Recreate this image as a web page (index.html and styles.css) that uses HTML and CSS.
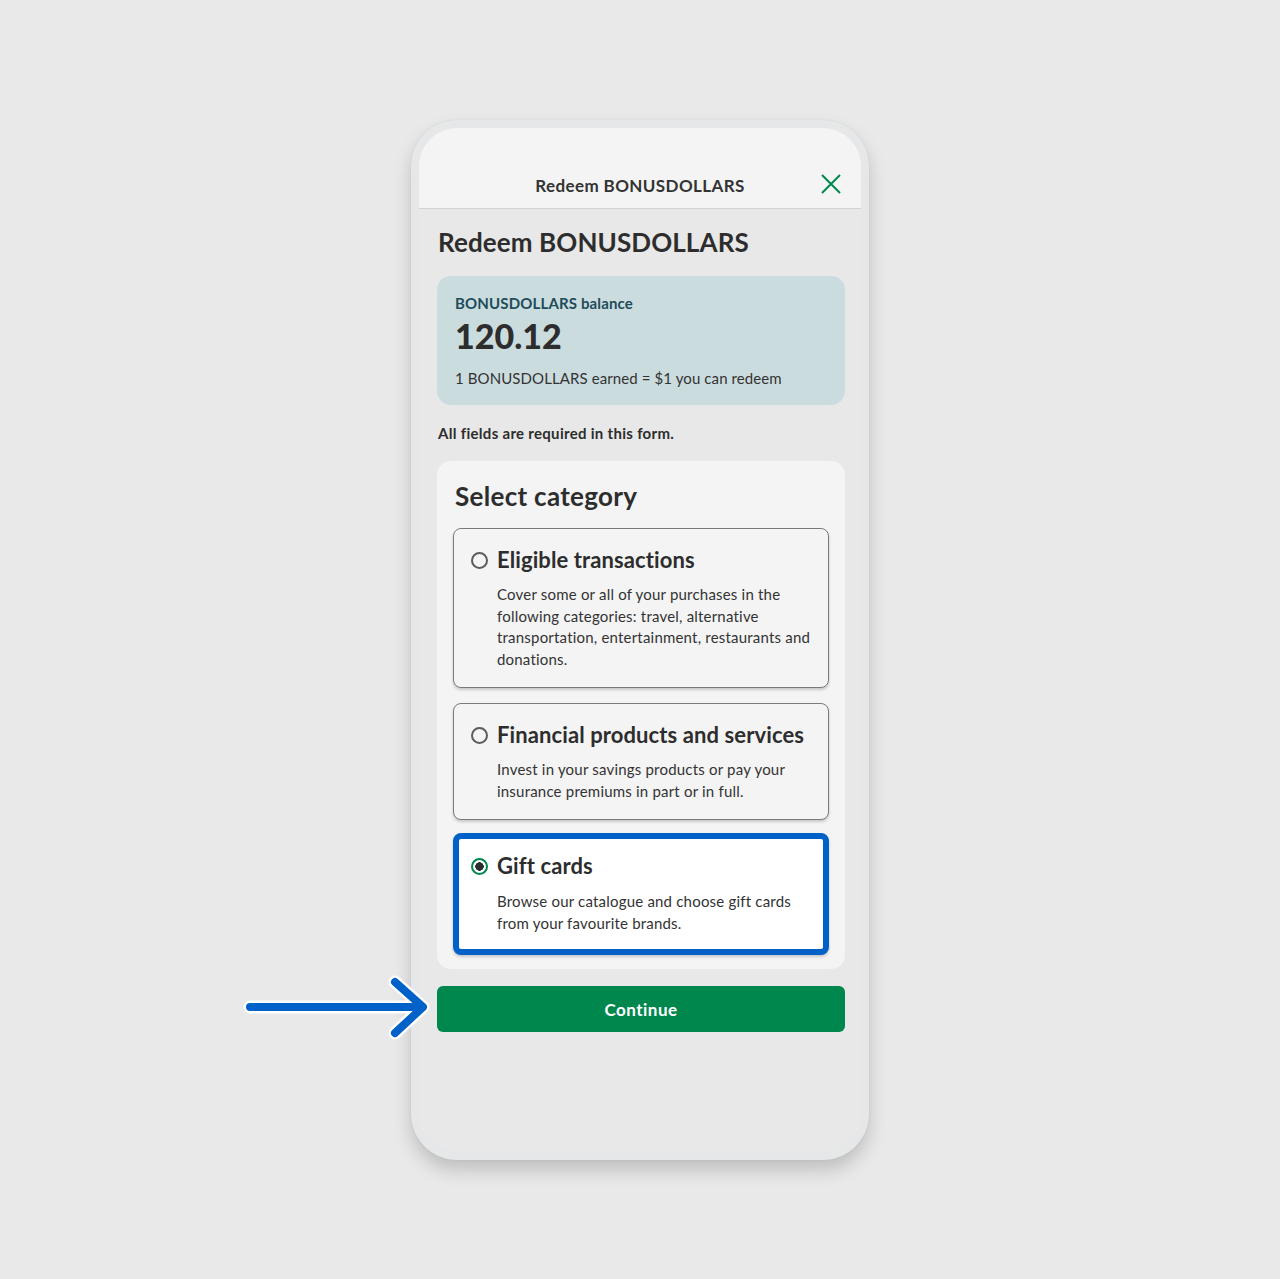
FILE: index.html
```html
<!DOCTYPE html>
<html lang="en">
<head>
  <meta charset="UTF-8" />
  <title>Redeem BONUSDOLLARS</title>
  <link rel="stylesheet" href="styles.css">
</head>
<body>
  <div class="phone">
    <!-- annotation arrow pointing at the button -->
    <svg class="arrow" width="200" height="72" viewBox="0 0 200 72">
      <g fill="none" stroke-linecap="round" stroke-linejoin="round">
        <path d="M10 35 H180 M155 10 L183 35 L155 61" stroke="#fff" stroke-width="13" />
        <path d="M10 35 H180 M155 10 L183 35 L155 61" stroke="#0061c9" stroke-width="8" />
      </g>
    </svg>

    <div class="screen">
      <div class="topbar">
        <span class="topbar-title">Redeem BONUSDOLLARS</span>
        <svg class="close" width="22" height="22" viewBox="0 0 22 22">
          <path d="M2 2 L20 20 M20 2 L2 20" stroke="#00874e" stroke-width="2" fill="none" />
        </svg>
      </div>

      <div class="content">
        <h1>Redeem BONUSDOLLARS</h1>

        <div class="balance">
          <div class="balance-label">BONUSDOLLARS balance</div>
          <div class="balance-value">120.12</div>
          <div class="balance-note">1 BONUSDOLLARS earned = $1 you can redeem</div>
        </div>

        <p class="required">All fields are required in this form.</p>

        <div class="panel">
          <h2>Select category</h2>

          <label class="option">
            <div class="option-head">
              <span class="radio"></span>
              <span class="option-title">Eligible transactions</span>
            </div>
            <p class="option-text">Cover some or all of your purchases in the following categories: travel, alternative transportation, entertainment, restaurants and donations.</p>
          </label>

          <label class="option">
            <div class="option-head">
              <span class="radio"></span>
              <span class="option-title">Financial products and services</span>
            </div>
            <p class="option-text">Invest in your savings products or pay your insurance premiums in part or in full.</p>
          </label>

          <label class="option selected">
            <div class="option-head">
              <span class="radio checked"></span>
              <span class="option-title">Gift cards</span>
            </div>
            <p class="option-text">Browse our catalogue and choose gift cards from your favourite brands.</p>
          </label>
        </div>

        <button class="continue">Continue</button>
      </div>
    </div>
  </div>
</body>
</html>
```

FILE: styles.css
```css
body {
  margin: 0;
  background-color: #e9e9e9;
  font-family: Lato, 'Noto Sans', sans-serif;
  color: #2d2d2d;
  display: flex;
  flex-direction: column;
  align-items: center;
  min-height: 1279px;
}

.phone {
  position: relative;
  margin-top: 120px;
  width: 458px;
  height: 1040px;
  box-sizing: border-box;
  padding: 8px;
  border-radius: 46px;
  background-color: #e6e7e8;
  box-shadow: 0 10px 18px rgba(0, 0, 0, 0.18), 0 0 2px rgba(0, 0, 0, 0.08);
}

.arrow {
  position: absolute;
  left: -171px;
  top: 852px;
}

.screen {
  height: 100%;
  border-radius: 38px;
  overflow: hidden;
  background-color: #e8e8e8;
}

.topbar {
  height: 81px;
  box-sizing: border-box;
  background-color: #f4f4f4;
  border-bottom: 1px solid #d2d2d2;
  display: flex;
  align-items: flex-end;
  justify-content: center;
  padding-bottom: 12px;
  position: relative;
}

.topbar-title {
  font-size: 17px;
  font-weight: bold;
  line-height: 20px;
  letter-spacing: 0.4px;
  color: #333;
}

.close {
  position: absolute;
  right: 19px;
  bottom: 13px;
}

.content {
  padding: 0 16px 0 18px;
  display: flex;
  flex-direction: column;
}

h1 {
  margin: 18px 0 0 1px;
  font-size: 26px;
  line-height: 30px;
  font-weight: bold;
  letter-spacing: 0.1px;
  color: #2d2d2d;
}

.balance {
  margin-top: 19px;
  background-color: #cbdcdf;
  border-radius: 14px;
  padding: 18px 17px 17px 18px;
}

.balance-label {
  font-size: 15px;
  line-height: 18px;
  font-weight: bold;
  letter-spacing: 0.15px;
  color: #1d4c5a;
}

.balance-value {
  margin-top: 4px;
  font-size: 34px;
  line-height: 40px;
  font-weight: 900;
  color: #2d2d2d;
}

.balance-note {
  margin-top: 12px;
  font-size: 15px;
  line-height: 20px;
  letter-spacing: 0.1px;
  color: #333;
}

.required {
  margin: 18px 0 0 1px;
  font-size: 15px;
  line-height: 20px;
  font-weight: bold;
  letter-spacing: 0.3px;
  color: #2d2d2d;
}

.panel {
  margin-top: 18px;
  background-color: #f4f4f4;
  border-radius: 14px;
  padding: 20px 16px 14px;
  display: flex;
  flex-direction: column;
  gap: 15px;
}

.panel h2 {
  margin: 0 0 2px 2px;
  font-size: 26px;
  line-height: 30px;
  font-weight: bold;
  letter-spacing: 0.3px;
  color: #2d2d2d;
}

.option {
  display: block;
  border: 1.5px solid #7a7a7a;
  border-radius: 8px;
  padding: 18px 12px 17px 17px;
  box-shadow: 0 2px 3px rgba(0, 0, 0, 0.18);
  background-color: #f4f4f4;
}

.option.selected {
  border: 6px solid #0061c9;
  background-color: #fff;
  padding: 14px 8px 15px 12px;
  margin-top: -2px;
}

.option-head {
  display: flex;
  align-items: center;
  gap: 9px;
}

.radio {
  width: 13px;
  height: 13px;
  border: 2px solid #5c5c5c;
  border-radius: 50%;
  flex: none;
}

.radio.checked {
  border-color: #00874e;
  background: radial-gradient(circle, #2d2d2d 0 4px, #fff 4.5px);
}

.option-title {
  font-size: 22px;
  line-height: 26px;
  font-weight: bold;
  letter-spacing: 0.1px;
  color: #2d2d2d;
}

.option-text {
  margin: 11px 0 0 26px;
  font-size: 15px;
  line-height: 21.5px;
  letter-spacing: 0.2px;
  color: #333;
}

.selected .option-text {
  margin-top: 12px;
}

.continue {
  margin-top: 17px;
  height: 46px;
  border: none;
  border-radius: 6px;
  background-color: #00874e;
  color: #fff;
  font-family: inherit;
  font-size: 17px;
  font-weight: bold;
  letter-spacing: 0.5px;
  cursor: pointer;
}
```
